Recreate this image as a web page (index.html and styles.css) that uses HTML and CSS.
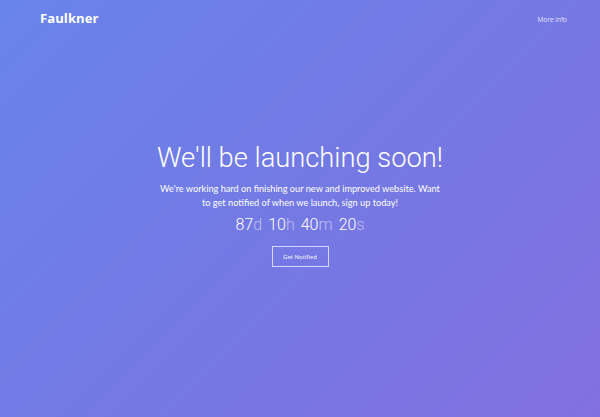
FILE: index.html
```html
<!DOCTYPE html>
<html>
<head>
<meta charset="utf-8">
<link rel="stylesheet" href="styles.css">
</head>
<body>
<div class="page">
  <header class="nav">
    <div class="logo">Faulkner</div>
    <a class="more" href="#">More info</a>
  </header>
  <main class="hero">
    <h1 class="title">We'll be launching soon!</h1>
    <p class="lead">We're working hard on finishing our new and improved website. Want to get notified of when we launch, sign up today!</p>
    <div class="countdown">
      <span class="unit">87<em>d</em></span>
      <span class="unit">10<em>h</em></span>
      <span class="unit">40<em>m</em></span>
      <span class="unit">20<em>s</em></span>
    </div>
    <a class="btn" href="#">Get Notified</a>
  </main>
</div>
</body>
</html>
```
FILE: styles.css
```css
html, body {
  margin: 0;
  padding: 0;
}
body {
  width: 600px;
  height: 417px;
  overflow: hidden;
  font-family: "Open Sans", "Liberation Sans", sans-serif;
  color: #fff;
}
.page {
  height: 417px;
  background: linear-gradient(135deg, #6884ea 0%, #7479e4 50%, #8270e0 100%);
  display: flex;
  flex-direction: column;
}
.nav {
  display: flex;
  justify-content: space-between;
  align-items: center;
  padding: 9px 33px 0 40px;
  height: 18px;
}
.logo {
  font-family: "Open Sans", sans-serif;
  font-weight: 700;
  font-size: 13px;
  letter-spacing: 0.1px;
}
.more {
  color: rgba(255,255,255,0.85);
  text-decoration: none;
  font-size: 6.5px;
  margin-top: 2px;
}
.hero {
  display: flex;
  flex-direction: column;
  align-items: center;
  text-align: center;
  padding-top: 113px;
}
.title {
  margin: 0;
  font-family: Roboto, sans-serif;
  font-weight: 300;
  font-size: 27.3px;
  line-height: 36px;
}
.lead {
  margin: 6px 0 0;
  width: 288px;
  font-family: Lato, sans-serif;
  font-size: 9.2px;
  line-height: 14px;
}
.countdown {
  display: flex;
  gap: 6px;
  margin-top: 4px;
  font-family: Roboto, sans-serif;
  font-weight: 300;
  font-size: 16px;
  line-height: 22px;
}
.unit em {
  font-style: normal;
  opacity: 0.5;
}
.btn {
  margin-top: 10px;
  width: 55px;
  height: 19px;
  border: 1px solid rgba(255,255,255,0.7);
  color: #fff;
  text-decoration: none;
  font-size: 6px;
  display: flex;
  align-items: center;
  justify-content: center;
}
```
